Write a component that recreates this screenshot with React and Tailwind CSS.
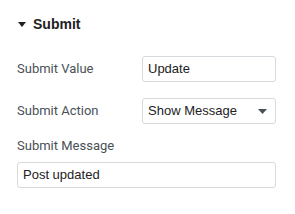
export default function App() {
  return (
    <div className="w-[295px] h-[214px] bg-white font-['Roboto',sans-serif] text-[#495157]">
      {/* Section header */}
      <div className="flex items-center h-[48px] pl-[18px] gap-[7px]">
        <svg width="8" height="5" viewBox="0 0 8 5" className="mt-[1px]">
          <path d="M0 0h8L4 5z" fill="#1f2124" />
        </svg>
        <span className="font-['Liberation_Sans',sans-serif] font-bold text-[14px] text-[#1f2124]">Submit</span>
      </div>

      <div className="px-[17px] pr-[19px]">
        {/* Submit Value */}
        <div className="flex items-center justify-between mt-[8px]">
          <label className="text-[13px]">Submit Value</label>
          <div className="w-[134px] h-[26px] border border-[#d5dadf] rounded-[3px] flex items-center px-[5px] font-['Liberation_Sans',sans-serif] text-[13px] text-[#222]">
            Update
          </div>
        </div>

        {/* Submit Action */}
        <div className="flex items-center justify-between mt-[16px]">
          <label className="text-[13px]">Submit Action</label>
          <div className="w-[134px] h-[26px] border border-[#d5dadf] rounded-[3px] flex items-center justify-between px-[5px] pr-[8px] font-['Liberation_Sans',sans-serif] text-[13px] text-[#222]">
            <span>Show Message</span>
            <svg width="9" height="5" viewBox="0 0 9 5">
              <path d="M0 0h9L4.5 5z" fill="#495157" />
            </svg>
          </div>
        </div>

        {/* Submit Message */}
        <div className="mt-[12px]">
          <label className="block text-[13px]">Submit Message</label>
          <div className="mt-[6px] w-full h-[26px] border border-[#d5dadf] rounded-[3px] flex items-center px-[5px] font-['Liberation_Sans',sans-serif] text-[13px] text-[#222]">
            Post updated
          </div>
        </div>
      </div>
    </div>
  );
}
